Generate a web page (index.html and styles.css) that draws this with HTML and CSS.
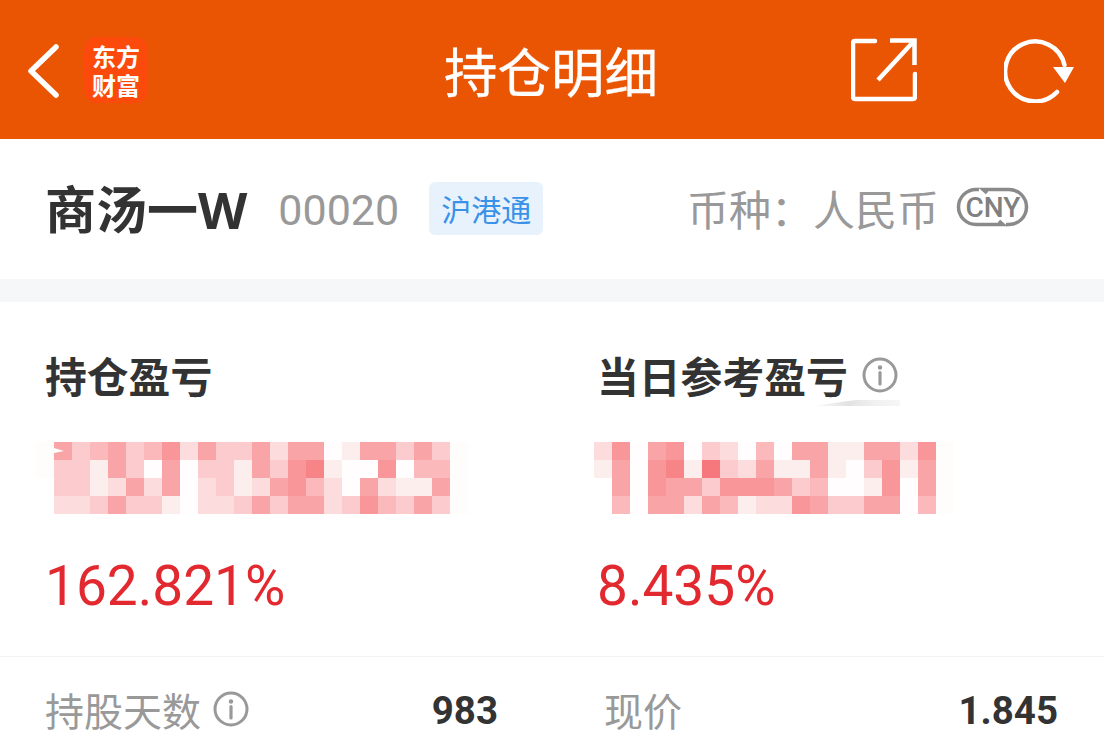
FILE: index.html
```html
<!DOCTYPE html>
<html lang="zh-CN">
<head>
<meta charset="utf-8">
<title>持仓明细</title>
<link rel="stylesheet" href="styles.css">
</head>
<body>
<div class="page">
  <header class="topbar">
    <div class="top-left">
      <svg class="back" width="36" height="56" viewBox="0 0 36 56"><path d="M31 4 L6 28 L31 52" fill="none" stroke="#fff" stroke-width="5.5" stroke-linecap="round" stroke-linejoin="round"/></svg>
      <div class="logo">东方<br>财富</div>
    </div>
    <h1 class="top-title">持仓明细</h1>
    <div class="top-right">
      <svg width="66" height="66" viewBox="0 0 66 66"><path d="M24 4 H4 Q2 4 2 6 V60 Q2 62 4 62 H62 Q64 62 64 60 V37" fill="none" stroke="#fff" stroke-width="4.5" stroke-linecap="round"/><path d="M39 3.500 H63.500 V28 M63 4 L27 43" fill="none" stroke="#fff" stroke-width="4.500"/></svg>
      <svg width="72" height="66" viewBox="0 0 72 66"><path d="M53 55 A30 30 0 1 1 60.500 28" fill="none" stroke="#fff" stroke-width="4.500" stroke-linecap="round"/><path d="M49 30 H70 L61 46 Z" fill="#fff"/></svg>
    </div>
  </header>

  <section class="stock">
    <div class="stock-main">
      <span class="stock-name">商汤一W</span>
      <span class="stock-code">00020</span>
      <span class="stock-tag">沪港通</span>
    </div>
    <div class="currency">
      <span>币种：人民币</span>
      <svg class="cny" width="73" height="40" viewBox="0 0 73 40">
        <path d="M23 2.500 H20 A17.500 17.500 0 0 0 20 37.500 H47 L43 34" fill="none" stroke="#8a8a8a" stroke-width="3.500"/>
        <path d="M31 6 L27 2.500 H53 A17.500 17.500 0 0 1 53 37.500 H50" fill="none" stroke="#8a8a8a" stroke-width="3.500"/>
        <text x="37" y="30" text-anchor="middle" class="cny-text">CNY</text>
      </svg>
    </div>
  </section>

  <div class="band"></div>

  <section class="metrics">
    <div class="metric">
      <div class="metric-title">持仓盈亏</div>
      <div class="pixels cols-left">
        <i class="f"></i><i class="s5 glint"></i><i class="s3"></i><i class="s4"></i><i class="s5"></i><i class="s3"></i><i class="s4"></i><i class="s6"></i><i class="s2"></i><i class="s5"></i><i class="s3"></i><i class="s3"></i><i class="s5"></i><i class="s2"></i><i class="s5"></i><i class="s5"></i><i class="s0"></i><i class="s1"></i><i class="s5"></i><i class="s5"></i><i class="s3"></i><i class="s5"></i><i class="s3"></i><i class="f"></i>
        <i class="f"></i><i class="s3"></i><i class="s3"></i><i class="s1"></i><i class="s5"></i><i class="s3"></i><i class="s0"></i><i class="s5"></i><i class="s0"></i><i class="s3"></i><i class="s3"></i><i class="s1"></i><i class="s5"></i><i class="s3"></i><i class="s6"></i><i class="s7"></i><i class="s1"></i><i class="s0"></i><i class="s0"></i><i class="s6"></i><i class="s0"></i><i class="s4"></i><i class="s4"></i><i class="f"></i>
        <i class="n"></i><i class="s3"></i><i class="s3"></i><i class="s1"></i><i class="s2"></i><i class="s5"></i><i class="s2"></i><i class="s5"></i><i class="s0"></i><i class="s2"></i><i class="s3"></i><i class="s1"></i><i class="s2"></i><i class="s5"></i><i class="s6"></i><i class="s4"></i><i class="s2"></i><i class="s0"></i><i class="s5"></i><i class="s2"></i><i class="s1"></i><i class="s1"></i><i class="s5"></i><i class="f"></i>
        <i class="n"></i><i class="s2"></i><i class="s2"></i><i class="s3"></i><i class="s5"></i><i class="s3"></i><i class="s3"></i><i class="s1"></i><i class="s0"></i><i class="s2"></i><i class="s2"></i><i class="s3"></i><i class="s5"></i><i class="s3"></i><i class="s5"></i><i class="s5"></i><i class="s2"></i><i class="s3"></i><i class="s6"></i><i class="s4"></i><i class="s3"></i><i class="s5"></i><i class="s3"></i><i class="f"></i>
      </div>
      <div class="metric-pct">162.821%</div>
    </div>
    <div class="metric">
      <div class="metric-title">当日参考盈亏 <svg class="info" viewBox="0 0 36 36"><circle cx="18" cy="18" r="16" fill="none" stroke="#999" stroke-width="3"/><circle cx="18" cy="10.500" r="2.200" fill="#999"/><path d="M18 15.500 V27" stroke="#999" stroke-width="3.200" stroke-linecap="round"/></svg><span class="smear"></span></div>
      <div class="pixels cols-right">
        <i class="s2"></i><i class="s6"></i><i class="s0"></i><i class="s5"></i><i class="s6"></i><i class="s0"></i><i class="s3"></i><i class="s2"></i><i class="s0"></i><i class="s4"></i><i class="s0"></i><i class="s5"></i><i class="s5"></i><i class="s1"></i><i class="s1"></i><i class="s5"></i><i class="s5"></i><i class="s2"></i><i class="s6"></i><i class="f"></i>
        <i class="s1"></i><i class="s5"></i><i class="s0"></i><i class="s6"></i><i class="s7"></i><i class="s1"></i><i class="s8"></i><i class="s3"></i><i class="s2"></i><i class="s5"></i><i class="s1"></i><i class="s1"></i><i class="s5"></i><i class="s1"></i><i class="s0"></i><i class="s3"></i><i class="s6"></i><i class="s1"></i><i class="s5"></i><i class="f"></i>
        <i class="n"></i><i class="s5"></i><i class="s0"></i><i class="s6"></i><i class="s5"></i><i class="s5"></i><i class="s3"></i><i class="s6"></i><i class="s6"></i><i class="s6"></i><i class="s5"></i><i class="s3"></i><i class="s4"></i><i class="s0"></i><i class="s0"></i><i class="s1"></i><i class="s6"></i><i class="s0"></i><i class="s5"></i><i class="f"></i>
        <i class="n"></i><i class="s4"></i><i class="s0"></i><i class="s5"></i><i class="s5"></i><i class="s2"></i><i class="s5"></i><i class="s4"></i><i class="s1"></i><i class="s2"></i><i class="s2"></i><i class="s6"></i><i class="s5"></i><i class="s3"></i><i class="s3"></i><i class="s5"></i><i class="s5"></i><i class="s0"></i><i class="s4"></i><i class="f"></i>
      </div>
      <div class="metric-pct">8.435%</div>
    </div>
  </section>

  <section class="rows">
    <div class="row">
      <span class="row-label">持股天数 <svg class="info" viewBox="0 0 36 36"><circle cx="18" cy="18" r="16" fill="none" stroke="#999" stroke-width="3"/><circle cx="18" cy="10.500" r="2.200" fill="#999"/><path d="M18 15.500 V27" stroke="#999" stroke-width="3.200" stroke-linecap="round"/></svg></span>
      <span class="row-value">983</span>
    </div>
    <div class="row">
      <span class="row-label">现价</span>
      <span class="row-value">1.845</span>
    </div>
  </section>
</div>
</body>
</html>
```
FILE: styles.css
```css
* { box-sizing: border-box; }
html, body { margin: 0; padding: 0; background: #fff; }
body { font-family: Roboto, "Noto Sans CJK SC", sans-serif; }
.page { width: 1104px; height: 754px; overflow: hidden; }

.topbar {
  height: 139px;
  background: #ea5504;
  display: grid;
  grid-template-columns: 1fr auto 1fr;
  align-items: center;
  padding: 0 28px 0 25px;
  color: #fff;
}
.top-left { display: flex; align-items: center; gap: 23px; }
.back { display: block; margin-top: 2px; }
.logo {
  width: 64px; height: 66px;
  padding-top: 4px;
  background: #fb4a0c;
  border-radius: 13px;
  text-align: center;
  font-family: "Noto Sans CJK SC", sans-serif;
  font-size: 24px; line-height: 29px; font-weight: 700;
}
.top-title {
  margin: 0 0 0 1px;
  font-family: "Noto Sans CJK SC", sans-serif;
  font-size: 53.500px; font-weight: 400;
  -webkit-text-stroke: 0.3px #fff;
  line-height: 1;
}
.top-right { display: flex; justify-content: flex-end; align-items: center; gap: 87px; }
.top-right svg { display: block; }

.stock {
  height: 140px;
  padding: 0 75px 4px 45px;
  display: flex; align-items: center; justify-content: space-between;
}
.stock-main { display: flex; align-items: center; }
.stock-name {
  font-size: 51px; font-weight: 700; color: #333;
  font-family: "Noto Sans", "Noto Sans CJK SC", sans-serif;
  margin-right: 31px;
}
.stock-code { font-size: 43px; color: #999; margin-right: 30px; position: relative; top: 3px; }
.stock-tag {
  width: 114px; height: 53px;
  background: #e8f2fc; color: #3a92e8;
  border-radius: 6px;
  font-size: 30px; font-family: "Noto Sans CJK SC", sans-serif;
  display: flex; align-items: center; justify-content: center;
  position: relative; top: 1px;
}
.currency {
  display: flex; align-items: center; gap: 17px;
  font-size: 42px; color: #999;
  font-family: "Noto Sans CJK SC", sans-serif;
}
.cny { display: block; }
.cny-text { font-family: Roboto, sans-serif; font-size: 28px; font-weight: 500; fill: #808080; }

.band { height: 23px; background: #f6f7f9; }

.metrics {
  display: grid;
  grid-template-columns: 552px 1fr;
  padding: 48px 0 0 45px;
  height: 355px;
  border-bottom: 1px solid #f3f3f3;
}
.metric-title {
  font-family: "Noto Sans CJK SC", sans-serif;
  font-size: 41.800px; font-weight: 700; color: #333;
  line-height: 50px;
  display: flex; align-items: center; gap: 14px;
  white-space: nowrap;
  position: relative;
}
.smear {
  position: absolute;
  left: 215px; top: 50px;
  width: 88px; height: 6px;
  background: linear-gradient(90deg, #fff, #e2e2e2 40%, #f0f0f0 70%, #f6f6f6);
  clip-path: polygon(0 100%, 35% 30%, 50% 0, 100% 0, 100% 100%);
}
.info { width: 36px; height: 36px; display: inline-block; vertical-align: middle; }
.pixels { display: grid; grid-auto-rows: 18px; margin-top: 42px; height: 72px; }
.pixels i { display: block; }
.cols-left { grid-template-columns: repeat(24, 18px); margin-left: -9px; }
.cols-right { grid-template-columns: repeat(20, 18px); margin-left: -3px; }
.metric-pct { font-size: 55px; color: #e1292f; line-height: 64px; margin-top: 40px; }
.f { background: #fffcfc; }
.n { background: #fff; }
.s0 { background: #fffdfd; }
.s1 { background: #fdeeee; }
.s2 { background: #fcdcdd; }
.s3 { background: #fbcbcd; }
.s4 { background: #fbb9bb; }
.s5 { background: #f9a5a8; }
.s6 { background: #f89699; }
.s7 { background: #f78487; }
.s8 { background: #f6787c; }
.pixels .glint { position: relative; }
.glint::after {
  content: "";
  position: absolute;
  left: 0; top: 6px;
  border-style: solid;
  border-width: 3px 0 2px 10px;
  border-color: transparent transparent transparent #fff;
}

.rows {
  display: grid;
  grid-template-columns: 559px 1fr;
  padding: 28px 46px 0 45px;
}
.row { display: flex; justify-content: space-between; align-items: center; height: 50px; }
.row:first-child { padding-right: 106px; }
.row-label {
  font-family: "Noto Sans CJK SC", sans-serif;
  font-size: 39px; color: #999;
  display: flex; align-items: center; gap: 12px;
  padding-bottom: 3px;
}
.row-value { font-size: 38.500px; font-weight: 700; color: #333; }
```
